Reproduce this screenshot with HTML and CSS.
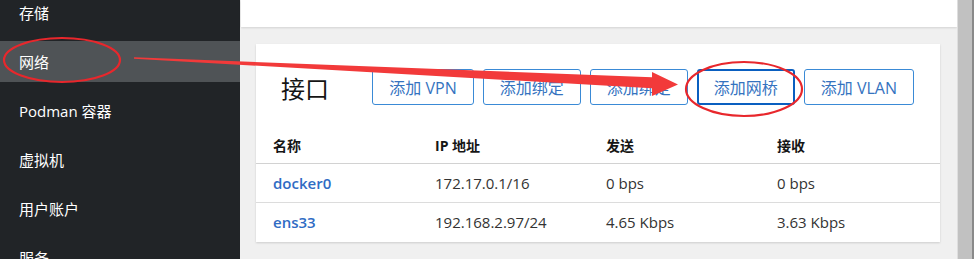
FILE: index.html
```html
<!DOCTYPE html>
<html lang="zh-CN">
<head>
    <meta charset="UTF-8">
    <title>网络 - Cockpit</title>
    <link rel="stylesheet" href="styles.css">
</head>
<body>
    <!-- 左侧导航 -->
    <nav class="sidebar">
        <div class="nav-item">存储</div>
        <div class="nav-item active">网络</div>
        <div class="nav-item">Podman 容器</div>
        <div class="nav-item">虚拟机</div>
        <div class="nav-item">用户账户</div>
        <div class="nav-item">服务</div>
    </nav>

    <main class="main">
        <div class="top-panel"></div>

        <div class="card">
            <div class="card-header">
                <h2 class="card-title">接口</h2>
                <div class="actions">
                    <button class="btn">添加 VPN</button>
                    <button class="btn">添加绑定</button>
                    <button class="btn">添加绑定</button>
                    <button class="btn focused">添加网桥</button>
                    <button class="btn">添加 VLAN</button>
                </div>
            </div>

            <div class="table">
                <div class="row head">
                    <div>名称</div>
                    <div>IP 地址</div>
                    <div>发送</div>
                    <div>接收</div>
                </div>
                <div class="row">
                    <div class="link">docker0</div>
                    <div>172.17.0.1/16</div>
                    <div>0 bps</div>
                    <div>0 bps</div>
                </div>
                <div class="row">
                    <div class="link">ens33</div>
                    <div>192.168.2.97/24</div>
                    <div>4.65 Kbps</div>
                    <div>3.63 Kbps</div>
                </div>
            </div>
        </div>
    </main>

    <div class="scrollbar"></div>

    <!-- 红色标注 -->
    <svg class="marks" width="974" height="259" viewBox="0 0 974 259">
        <ellipse cx="62" cy="60" rx="58" ry="22" />
        <ellipse cx="744" cy="89" rx="58" ry="27" />
        <polygon points="134,57.3 652,77.3 652,72 678,84.5 652,96 652,88.3 134,58.7" />
    </svg>
</body>
</html>
```

FILE: styles.css
```css
body {
    margin: 0;
    height: 259px;
    overflow: hidden;
    display: flex;
    font-family: "Open Sans", "Noto Sans CJK SC", sans-serif;
    background: #f0f0f0;
}
.sidebar {
    width: 240px;
    flex-shrink: 0;
    background: #212427;
    display: flex;
    flex-direction: column;
    gap: 8px;
    margin-top: -8px;
}
.nav-item {
    height: 41px;
    flex-shrink: 0;
    display: flex;
    align-items: center;
    padding-left: 19px;
    color: #fff;
    font-size: 15px;
}
.nav-item.active {
    background: #4f5356;
}
.main {
    flex: 1;
    display: flex;
    flex-direction: column;
    min-width: 0;
}
.top-panel {
    height: 27px;
    margin-left: 1px;
    background: #fff;
    box-shadow: 0 1px 2px rgba(0,0,0,0.12);
}
.card {
    margin: 17px 17px 0 16px;
    padding-bottom: 1px;
    background: #fff;
    box-shadow: 0 1px 2px rgba(0,0,0,0.15);
}
.card-header {
    display: flex;
    justify-content: space-between;
    align-items: center;
    padding: 25px 26px 0 25px;
}
.card-title {
    margin: 0;
    font-size: 24px;
    font-weight: normal;
    color: #151515;
}
.actions {
    display: flex;
    gap: 9px;
}
.btn {
    height: 36px;
    padding: 0 16px;
    border: 1px solid #3a8ad6;
    border-radius: 3px;
    background: #fff;
    color: #3573bf;
    font-family: "Open Sans", "Noto Sans CJK SC", sans-serif;
    font-size: 16px;
}
.btn.focused {
    border: 2px solid #0a5fc0;
    padding: 0 15px;
}
.table {
    margin-top: 22px;
}
.row {
    display: grid;
    grid-template-columns: 162px 171px 171px 1fr;
    padding-left: 17px;
    height: 38px;
    align-items: center;
    border-top: 1px solid #dcdcdc;
    font-size: 15px;
    color: #333;
}
.row.head {
    border-top: none;
    height: 36px;
    font-size: 14px;
    font-weight: bold;
    color: #151515;
}
.row.head + .row {
    border-top: 1px solid #d2d2d2;
}
.link {
    color: #2f6cc4;
    font-weight: 600;
}
.scrollbar {
    width: 14px;
    flex-shrink: 0;
    background: #c1c1c1;
    border-left: 1px solid #dedede;
    border-right: 2px solid #8a8a8a;
}
.marks {
    position: absolute;
    top: 0;
    left: 0;
    pointer-events: none;
}
.marks ellipse {
    fill: none;
    stroke: #e8272c;
    stroke-width: 2.2;
}
.marks polygon {
    fill: #f23a3a;
}
```
